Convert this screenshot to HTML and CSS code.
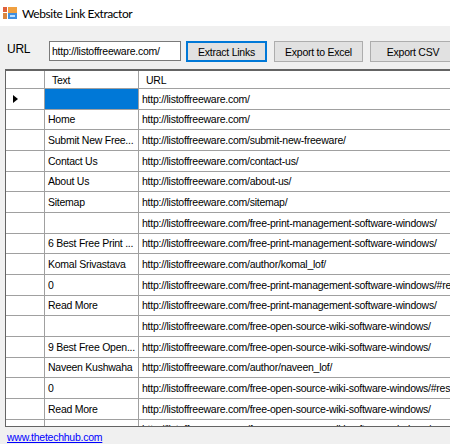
FILE: index.html
```html
<!DOCTYPE html>
<html>
<head>
<meta charset="utf-8">
<link rel="stylesheet" href="styles.css">
</head>
<body>
<div class="window">
  <div class="titlebar">
    <svg class="appicon" width="14" height="12" viewBox="0 0 14 12">
      <rect x="0" y="0" width="4" height="5" fill="#e0603a"/>
      <rect x="0" y="6" width="4" height="6" fill="#d9863f"/>
      <rect x="5" y="0" width="9" height="6" fill="#f0a040"/>
      <rect x="5" y="6" width="9" height="6" fill="#3f8fe0"/>
      <rect x="7" y="8" width="5" height="2" fill="#bfe0ff"/>
    </svg>
    <span class="title">Website Link Extractor</span>
  </div>
  <div class="toolbar">
    <span class="label">URL</span>
    <div class="textbox">http://listoffreeware.com/</div>
    <div class="btn btn-default btn-extract">Extract Links</div>
    <div class="btn btn-excel">Export to Excel</div>
    <div class="btn btn-csv">Export CSV</div>
  </div>
  <div class="grid">
    <div class="row head">
      <div class="cell rh"></div>
      <div class="cell c1 hc">Text</div>
      <div class="cell c2 hc">URL</div>
    </div>
    <div class="row">
      <div class="cell rh"><svg width="5" height="8" viewBox="0 0 5 8"><polygon points="0,0 5,4 0,8" fill="#000"/></svg></div>
      <div class="cell c1 sel"></div>
      <div class="cell c2">http://listoffreeware.com/</div>
    </div>
    <div class="row"><div class="cell rh"></div><div class="cell c1">Home</div><div class="cell c2">http://listoffreeware.com/</div></div>
    <div class="row"><div class="cell rh"></div><div class="cell c1">Submit New Free...</div><div class="cell c2">http://listoffreeware.com/submit-new-freeware/</div></div>
    <div class="row"><div class="cell rh"></div><div class="cell c1">Contact Us</div><div class="cell c2">http://listoffreeware.com/contact-us/</div></div>
    <div class="row"><div class="cell rh"></div><div class="cell c1">About Us</div><div class="cell c2">http://listoffreeware.com/about-us/</div></div>
    <div class="row"><div class="cell rh"></div><div class="cell c1">Sitemap</div><div class="cell c2">http://listoffreeware.com/sitemap/</div></div>
    <div class="row"><div class="cell rh"></div><div class="cell c1"></div><div class="cell c2">http://listoffreeware.com/free-print-management-software-windows/</div></div>
    <div class="row"><div class="cell rh"></div><div class="cell c1">6 Best Free Print ...</div><div class="cell c2">http://listoffreeware.com/free-print-management-software-windows/</div></div>
    <div class="row"><div class="cell rh"></div><div class="cell c1">Komal Srivastava</div><div class="cell c2">http://listoffreeware.com/author/komal_lof/</div></div>
    <div class="row"><div class="cell rh"></div><div class="cell c1">0</div><div class="cell c2">http://listoffreeware.com/free-print-management-software-windows/#respond</div></div>
    <div class="row"><div class="cell rh"></div><div class="cell c1">Read More</div><div class="cell c2">http://listoffreeware.com/free-print-management-software-windows/</div></div>
    <div class="row"><div class="cell rh"></div><div class="cell c1"></div><div class="cell c2">http://listoffreeware.com/free-open-source-wiki-software-windows/</div></div>
    <div class="row"><div class="cell rh"></div><div class="cell c1">9 Best Free Open...</div><div class="cell c2">http://listoffreeware.com/free-open-source-wiki-software-windows/</div></div>
    <div class="row"><div class="cell rh"></div><div class="cell c1">Naveen Kushwaha</div><div class="cell c2">http://listoffreeware.com/author/naveen_lof/</div></div>
    <div class="row"><div class="cell rh"></div><div class="cell c1">0</div><div class="cell c2">http://listoffreeware.com/free-open-source-wiki-software-windows/#respond</div></div>
    <div class="row"><div class="cell rh"></div><div class="cell c1">Read More</div><div class="cell c2">http://listoffreeware.com/free-open-source-wiki-software-windows/</div></div>
    <div class="row"><div class="cell rh"></div><div class="cell c1"></div><div class="cell c2">http://listoffreeware.com/free-open-source-wiki-software-windows/</div></div>
  </div>
  <a class="footer-link" href="#">www.thetechhub.com</a>
</div>
</body>
</html>
```
FILE: styles.css
```css
html, body {
  margin: 0;
  padding: 0;
  width: 450px;
  height: 444px;
  overflow: hidden;
  background: #f0f0f0;
}
.window {
  width: 450px;
  height: 444px;
  overflow: hidden;
  font-family: "Liberation Sans", Arial, sans-serif;
  font-size: 10.5px;
  letter-spacing: -0.25px;
  color: #000;
}
.titlebar {
  height: 26px;
  background: #fff;
  display: flex;
  align-items: center;
  padding-left: 3px;
  box-sizing: border-box;
}
.appicon {
  display: block;
  margin-right: 5px;
  flex-shrink: 0;
}
.title {
  font-family: Lato, "Noto Sans", sans-serif;
  font-size: 12px;
  letter-spacing: -0.45px;
  color: #000;
}
.toolbar {
  height: 43px;
  box-sizing: border-box;
  padding-top: 15px;
  display: flex;
  align-items: flex-start;
}
.toolbar > * {
  flex-shrink: 0;
}
.label {
  width: 42px;
  margin-left: 7px;
  line-height: 16px;
  font-size: 12px;
}
.textbox {
  width: 132px;
  height: 20px;
  box-sizing: border-box;
  border: 1px solid #7a7a7a;
  background: #fff;
  padding-left: 2px;
  line-height: 18px;
  white-space: nowrap;
  overflow: hidden;
}
.btn {
  height: 21px;
  box-sizing: border-box;
  border: 1px solid #adadad;
  background: #e1e1e1;
  display: flex;
  align-items: center;
  justify-content: center;
  white-space: nowrap;
}
.btn-default {
  border: 2px solid #0078d7;
}
.btn-extract { width: 81px; margin-left: 5px; }
.btn-excel { width: 89px; margin-left: 7px; }
.btn-csv { width: 86px; margin-left: 7px; }
.grid {
  margin-left: 5px;
  width: 470px;
  height: 358px;
  box-sizing: border-box;
  border-top: 2px solid #646464;
  border-left: 1px solid #646464;
  border-bottom: 1px solid #646464;
  background: #fff;
  overflow: hidden;
}
.row {
  display: grid;
  grid-template-columns: 39px 94px 1fr;
  height: 20.667px;
  box-sizing: border-box;
  border-bottom: 1px solid #a0a0a0;
}
.row.head {
  height: 18px;
}
.cell {
  border-right: 1px solid #a0a0a0;
  box-sizing: border-box;
  white-space: nowrap;
  overflow: hidden;
  display: flex;
  align-items: center;
  padding-left: 3px;
}
.c2 { border-right: none; }
.hc { padding-left: 7px; }
.rh {
  padding-left: 7px;
}
.rh svg { display: block; }
.sel { background: #0078d7; }
.footer-link {
  display: block;
  margin: 4px 0 0 7px;
  color: #0000ff;
  text-decoration: underline;
  line-height: 12px;
  width: max-content;
}
```
